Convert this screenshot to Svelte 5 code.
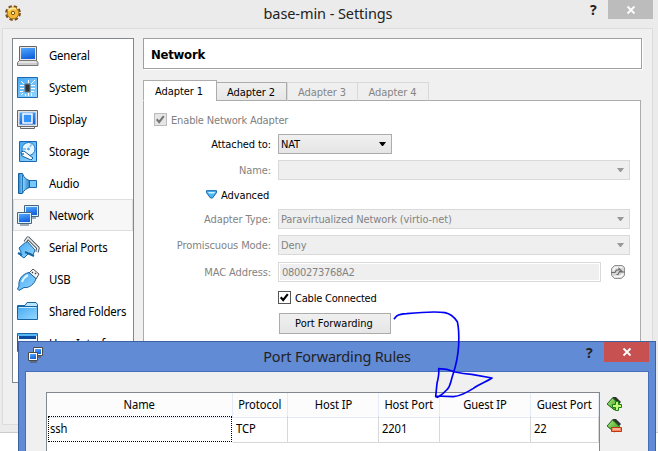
<script>
  const pages = [
    ['General', 'general'], ['System', 'system'], ['Display', 'display'],
    ['Storage', 'storage'], ['Audio', 'audio'], ['Network', 'network'],
    ['Serial Ports', 'serial'], ['USB', 'usb'], ['Shared Folders', 'folder'],
    ['User Interface', 'ui']
  ];
  const tabs = ['Adapter 1', 'Adapter 2', 'Adapter 3', 'Adapter 4'];
  const columns = ['Name', 'Protocol', 'Host IP', 'Host Port', 'Guest IP', 'Guest Port'];
  const rule = ['ssh', 'TCP', '', '2201', '', '22'];
</script>

{#snippet select(value, enabled)}
  <div class="select" class:enabled>
    <span>{value}</span>
    <svg width="7" height="4" viewBox="0 0 7 4"><path d="M0 0h7L4 4H3z" fill={enabled ? '#000' : '#999'} /></svg>
  </div>
{/snippet}

{#snippet check(color)}
  <svg width="11" height="11" viewBox="0 0 11 11"><path d="M1.7 5.2 4.2 8 8.8 2.2" fill="none" stroke={color} stroke-width="2.1" /></svg>
{/snippet}

{#snippet icon(name)}
  <svg class="icon" width="22" height="22" viewBox="0 0 22 22">
    {#if name === 'general'}
      <path d="M2.5 1.5h17v14h-17z" fill="#e8e8e8" stroke="#666" />
      <path d="M4 3h14v11H4z" fill="url(#blue)" />
      <path d="M.5 17.5 2.5 15.5h17l1.5 2v3H.5z" fill="#ccc" stroke="#777" /><path d="M2 17h17" stroke="#fff" />
    {:else if name === 'system'}
      <path d="M.5.5h20v20H.5z" fill="url(#sky)" stroke="#1b69b5" />
      <path d="M8 7h5v8H8z" fill="#333" stroke="#777" />
      <path d="M3 8.5h4M3 11.5h4M3 14.5h3M14 8.5h4M14 11.5h4M14 14.5h3M11.5 3v3M8.5 17v2M11.5 16v3M14.5 16v3M4 4l3 3M18 3l-4 4M4 18l2-2" stroke="#fff" fill="none" />
    {:else if name === 'display'}
      <path d="M.5 1.5h20v16H.5z" fill="#e4e4e4" stroke="#666" /><path d="M3.5 17.5h14v2h-14z" fill="#eee" stroke="#666" />
      <path d="M2.5 3.5h16v12h-16z" fill="url(#blue)" /><path d="M6 5h9v9H6z" fill="#3593fb" stroke="#fff" stroke-width="1.5" />
    {:else if name === 'storage'}
      <path d="M2.5.5h17v20h-17z" fill="url(#sky)" stroke="#1866b4" />
      <circle cx="11.5" cy="8" r="6.5" fill="#eaf6ff" stroke="#1778c8" /><path d="m11 8 4-5M11 8H6" stroke="#8cc9f8" stroke-width="2" />
      <circle cx="11.5" cy="8" r="2" fill="#53abf0" stroke="#fff" />
      <path d="m4 11 3-1 9 7-2 2-9-4z" fill="#fff" stroke="#17609f" /><circle cx="6" cy="13" r="1" fill="#2b78bc" />
    {:else if name === 'audio'}
      <path d="M12 7.5h7.5v7H12z" fill="#78c7fb" stroke="#1c69ad" />
      <path d="M1.5.5h4c1 4 4 6 7 7v7c-3 1-6 3-7 6h-4z" fill="url(#speaker)" stroke="#17619f" /><path d="M5.5 1v19" stroke="#2179bb" />
    {:else if name === 'network'}
      <path d="M7.5.5h14v11h-14zM11 13h8" fill="#d9efff" stroke="#47657e" /><path d="M9 2h11v8H9z" fill="url(#blue)" />
      <path d="M.5 7.5h14v11H.5zM3 20h9" fill="#d9efff" stroke="#47657e" /><path d="M2 9h11v8H2z" fill="url(#blue)" />
    {:else if name === 'serial'}
      <path d="m2 11 8-7 8 9-2 5-4-2-5 5-4-3 1-3z" fill="url(#sky)" stroke="#1766a4" />
      <path d="m5 18-4-2M8 15l9 4" stroke="#1766a4" stroke-width="2" />
      <path d="m8 5 3-4 10 10-1 4" fill="none" stroke="#4b555d" stroke-width="3.4" stroke-linejoin="round" /><path d="m8 5 3-4 10 10-1 4" fill="none" stroke="#eee" stroke-width="1.5" />
    {:else if name === 'usb'}
      <path d="m12 4 4-4 6 5-3 5z" fill="#f6f6f6" stroke="#555" /><path d="m15 3 1 1m2 0 1 1" stroke="#444" stroke-width="1.5" />
      <path d="M2 17C1 11 5 5 12 3.5l7 6c-1 5-7 10-12 9l-5 3-1.5-1.5z" fill="url(#sky)" stroke="#17619f" />
      <path d="M5 13q2-5 6-7" fill="none" stroke="#e0f7ff" stroke-width="2" />
    {:else if name === 'folder'}
      <path d="M.5 4.5H8l2-3h9l1.5 2v14H.5z" fill="#b9e5ff" stroke="#1765a6" /><path d="M.5 5.5h20v13H.5z" fill="url(#sky)" stroke="#1765a6" /><path d="M2 6.5h17" stroke="#c8ecff" />
    {:else}
      <path d="M.5.5h20v18H.5z" fill="#eff8ff" stroke="#1765a6" /><path d="M1 1h19v2H1z" fill="#58b7f7" /><path d="M2 3h17v3H2z" fill="#0b4b9f" />
      <path d="M3 8h5v9H3z" fill="#53aff4" /><path d="M10 8h8v2h-8z" fill="#175aa5" />
    {/if}
  </svg>
{/snippet}

<svg class="defs" width="0" height="0"><defs>
  <linearGradient id="blue" x2=".3" y2="1"><stop stop-color="#50a8ff" /><stop offset="1" stop-color="#1764df" /></linearGradient>
  <linearGradient id="sky" x2=".8" y2="1"><stop stop-color="#45a8f2" /><stop offset="1" stop-color="#8fd4ff" /></linearGradient>
  <linearGradient id="speaker"><stop stop-color="#277fc5" /><stop offset=".4" stop-color="#8ad2ff" /><stop offset="1" stop-color="#2d83c9" /></linearGradient>
  <linearGradient id="green" x2="1" y2="1"><stop stop-color="#b6ed80" /><stop offset="1" stop-color="#27901b" /></linearGradient>
</defs></svg>

<div class="screen">
  <section class="settings">
    <header class="titlebar">
      <svg class="gear" width="17" height="17" viewBox="0 0 17 17">
        <circle cx="8" cy="8" r="6.4" fill="none" stroke="#76501d" stroke-width="3" stroke-dasharray="3.1 1.93" />
        <circle cx="8" cy="8" r="5.8" fill="#f2b735" stroke="#b27518" /><path d="M3.5 6Q6 2 11 4" stroke="#ffe793" stroke-width="2" fill="none" />
        <circle cx="8" cy="8" r="1.7" fill="#fff1a1" stroke="#80500f" />
      </svg>
      <h1>base-min - Settings</h1><b class="help">?</b>
      <button class="close"><svg width="8" height="8"><path d="m.5.5 7 7m0-7-7 7" stroke="#fff" stroke-width="1.8" /></svg></button>
    </header>
    <div class="client">
      <nav>
        {#each pages as [label, name]}
          <div class="page" class:current={name === 'network'}>{@render icon(name)}<span>{label}</span></div>
        {/each}
      </nav>
      <main>
        <h2>Network</h2>
        <div class="tabs">
          {#each tabs as tab, i}<div class="tab" class:active={i === 0} class:off={i > 1}>{tab}</div>{/each}
        </div>
        <div class="panel">
          <div class="enable"><i class="box off">{@render check('#777')}</i><span>Enable Network Adapter</span></div>
          <div class="row"><label>Attached to:</label><div class="short">{@render select('NAT', true)}</div></div>
          <div class="row dim"><label>Name:</label>{@render select('', false)}</div>
          <div class="advanced"><svg width="11" height="9" viewBox="0 0 11 9"><path d="M.5.7h10v2L6.5 8h-2l-4-5.3z" fill="#4fb6ef" stroke="#1166b3" /><path d="M2 2h7L8 3.5H3z" fill="#cbf2ff" /></svg><span>Advanced</span></div>
          <div class="row dim"><label>Adapter Type:</label>{@render select('Paravirtualized Network (virtio-net)', false)}</div>
          <div class="row dim"><label>Promiscuous Mode:</label>{@render select('Deny', false)}</div>
          <div class="row dim mac"><label>MAC Address:</label><div class="field">0800273768A2</div>
            <svg width="16" height="16" viewBox="0 0 16 16"><path d="M4.5 1.5h8l2 2v8l-3 3h-7l-3-3v-7z" fill="#d6d6d6" stroke="#929292" /><path d="M3 6.5q1-3 4-3h5M13 9.5q-1 3-4 3H4" fill="none" stroke="#fafafa" stroke-width="1.5" /><path d="M1 8.5h4l1.5-2.5H9V4.5l3 3H9.5L8 10.5H6.5M9.5 8H15" fill="none" stroke="#6d6d6d" stroke-width="1.2" /></svg>
          </div>
          <div class="cable"><i class="box">{@render check('#000')}</i><span>Cable Connected</span></div>
          <button class="forward">Port Forwarding</button>
        </div>
      </main>
    </div>
  </section>

  <section class="dialog">
    <header class="titlebar">
      <svg class="net" width="16" height="16" viewBox="0 0 16 16"><path d="M5.5.5h9v8h-9zM8 10h5" fill="#fff" stroke="#4b4b4b" /><path d="M7 2h6v5H7z" fill="url(#blue)" /><path d="M.5 5.5h9v8h-9zM2 15h7" fill="#fff" stroke="#4b4b4b" /><path d="M2 7h6v5H2z" fill="url(#blue)" /></svg>
      <h1>Port Forwarding Rules</h1><b class="help">?</b>
      <button class="close"><svg width="8" height="8"><path d="m.5.5 7 7m0-7-7 7" stroke="#fff" stroke-width="1.8" /></svg></button>
    </header>
    <div class="content">
      <div class="table">
        <div class="cells head">{#each columns as column}<div><span>{column}</span></div>{/each}</div>
        <div class="cells rule">{#each rule as cell}<div><span>{cell}</span></div>{/each}</div>
      </div>
      <div class="tools">
        {#each [true, false] as add}
          <svg width="17" height="17" viewBox="0 0 17 17"><path d="m7 1 3 0 5 5-7 8-7-6z" fill="#303530" /><path d="m6.5 2 7 6.5-5 5.5L1 8z" fill="url(#green)" stroke="#1e7419" />
            {#if add}<path d="M9.5 5.5h3v3h3v3h-3v3h-3v-3h-3v-3h3z" fill="#c8fa78" stroke="#16801a" />{:else}<path d="M5.5 9.5h10v4h-10z" fill="#f58a62" stroke="#c23512" /><path d="M7 11h7" stroke="#ffd9c4" />{/if}
          </svg>
        {/each}
      </div>
    </div>
  </section>

  <svg class="ink" width="658" height="451" viewBox="0 0 658 451">
    <path transform="translate(340 300) scale(.33333)" d="M163 56 170 48Q180 42 200 41C240 37 290 34 315 38C335 42 345 55 352 65C358 90 357 110 356 135C354 170 350 190 340 220C330 250 332 258 322 268C312 280 300 288 293 292L287 290 291 250Q298 225 296 206C320 206 330 210 345 216Q370 222 395 223L456 234C440 245 420 250 400 265C380 278 360 288 340 290L287 288" />
  </svg>
</div>

<style>
  :global(body) { margin: 0; overflow: hidden; background: #fff; }
  * { box-sizing: border-box; }
  .defs { position: absolute; }
  svg { display: block; flex: none; overflow: visible; }
  h1, h2 { margin: 0; font-weight: 400; }
  button { padding: 0; border: 0; }
  .screen { position: relative; width: 658px; height: 451px; overflow: hidden; font: 12px/16px "Noto Sans", sans-serif; color: #000; }
  .settings { height: 433px; background: #ebebeb; border-bottom: 1px solid #ccc; display: flex; flex-direction: column; }
  .titlebar { display: flex; height: 28px; align-items: flex-start; flex: none; }
  .gear { margin: 5px 0 0 5px; }
  .titlebar h1 { flex: 1; text-align: center; font: 14.5px/28px "Noto Sans", sans-serif; letter-spacing: -.18px; color: #222; white-space: nowrap; }
  .settings .titlebar h1 { padding-left: 44px; line-height: 26px; letter-spacing: -.08px; }
  .help { font: bold 14px/19px "Noto Sans", sans-serif; width: 18px; color: #222; }
  .close { width: 45px; height: 19px; display: flex; align-items: center; justify-content: center; background: #bcbcbc; margin-right: 5px; }
  .client { margin: 0 5px 7px 2px; flex: 1; min-height: 0; border: 1px solid #dcdcdc; background: #f0f0f0; display: flex; padding: 9px 10px 0 9px; gap: 9px; }
  nav { width: 122px; height: 345px; flex: none; border: 1px solid #828790; background: #fff; overflow: hidden; }
  .page { height: 32px; display: flex; align-items: center; gap: 10px; padding: 0 0 1px 3px; font-size: 12.3px; letter-spacing: -.22px; white-space: nowrap; border: 1px solid transparent; }
  .page span { padding-top: 2px; transform: scaleX(.93); transform-origin: left; }
  .page .icon { transform: translateY(1px); }
  .current { background: #f7f7f7; border-color: #dedede; }
  main { flex: 1; min-width: 0; display: flex; flex-direction: column; font: 11px/14px "DejaVu Sans Condensed", "DejaVu Sans", sans-serif; letter-spacing: -.1px; }
  h2 { height: 31px; border: 1px solid #a0a0a0; background: #fff; box-shadow: 1px 1px #fff; font: bold 13px/31px "DejaVu Sans Condensed", sans-serif; letter-spacing: -.25px; padding-left: 7px; margin-bottom: 11px; flex: none; }
  .tabs { display: flex; align-items: flex-end; height: 21px; flex: none; margin-bottom: -1px; position: relative; }
  .tab { width: 71px; height: 19px; border: 1px solid #acacac; background: linear-gradient(#f0f0f0, #e7e7e7); text-align: center; line-height: 19px; white-space: nowrap; padding-right: 1px; }
  .tab.active { width: 74px; height: 21px; background: #fff; border-bottom-color: #fff; padding-right: 2px; line-height: 21px; }
  .tab.active + .tab { margin-left: -1px; }
  .tab.off { color: #858585; border-color: #d9d9d9; border-bottom-color: #acacac; background: #efefef; }
  .tab.off + .off { border-left: 0; }
  .panel { flex: 1; border: 1px solid #acacac; margin-right: 1px; background: #fff; padding: 12px 10px 0; min-height: 0; }
  .enable, .cable, .advanced { display: flex; align-items: center; gap: 4px; white-space: nowrap; }
  .enable { height: 13px; color: #808080; margin-bottom: 8px; letter-spacing: -.15px; }
  .enable span, .cable span { padding-top: 2px; }
  .box { width: 13px; height: 13px; border: 1px solid #555; background: #fff; }
  .box.off { border-color: #bcbcbc; background: #e6e6e6; }
  .row { display: flex; align-items: center; gap: 7px; height: 20px; margin-bottom: 6px; }
  .row label { width: 117px; text-align: right; white-space: nowrap; flex: none; padding-top: 1px; }
  .dim { color: #838383; }
  .short { width: 114px; display: flex; }
  .select { flex: 1; height: 20px; border: 1px solid #d9d9d9; background: #efefef; display: flex; align-items: center; justify-content: space-between; padding: 0 5px 0 2px; white-space: nowrap; }
  .select span { padding-top: 2px; }
  .select.enabled { border-color: #acacac; background: linear-gradient(#f0f0f0, #e5e5e5); }
  .advanced { height: 17px; margin: 0 0 6px 52px; }
  .advanced span { padding-top: 2px; }
  .mac { margin: 7px 0 9px; }
  .field { width: 323px; height: 20px; border: 1px solid #d9d9d9; box-shadow: inset 0 0 0 1px #fff; background: #efefef; padding-left: 3px; line-height: 20px; letter-spacing: -.3px; }
  .mac svg { margin-left: 2px; }
  .cable { height: 13px; margin-left: 124px; letter-spacing: -.2px; }
  .forward { display: block; width: 112px; height: 21px; margin: 9px 0 0 125px; padding: 1px 2px 0 0; border: 1px solid #acacac; background: linear-gradient(#f0f0f0, #e5e5e5); font: inherit; color: #000; white-space: nowrap; }
  .dialog { position: absolute; left: 18px; top: 341px; width: 638px; height: 111px; background: #628bd5; border: 1px solid #3c60a2; display: flex; flex-direction: column; }
  .dialog .titlebar { height: 29px; }
  .net { margin: 5px 0 0 9px; }
  .dialog h1 { padding-left: 44px; line-height: 28px; }
  .dialog .help { line-height: 21px; }
  .dialog .close { background: #c75050; height: 20px; margin-right: 6px; }
  .content { flex: 1; min-height: 0; margin: 0 6px; border: 1px solid #446ebb; border-bottom: 0; background: #f0f0f0; display: flex; padding: 20px 0 0 20px; gap: 6px; }
  .table { width: 554px; border: 1px solid #828790; border-bottom: 0; background: #fff; font-size: 12.3px; letter-spacing: -.1px; }
  .cells { display: grid; grid-template-columns: 186px 55px 91px 61px 91px 68px; }
  .cells div { border-right: 1px solid #d8d8d8; border-bottom: 1px solid #d8d8d8; white-space: nowrap; }
  .cells span { display: inline-block; transform: scaleX(.91); }
  .head { height: 23px; background: #fcfcfc; text-align: center; line-height: 24px; }
  .head div { border-color: #e2ebf7; }
  .rule { height: 25px; line-height: 26px; }
  .rule div { padding-left: 3px; }
  .rule span { transform-origin: left; }
  .rule div:first-child { border: 1px dotted #000; padding-left: 1px; margin: 0 1px 1px; line-height: 23px; }
  .tools { display: flex; flex-direction: column; gap: 5px; padding-top: 4px; }
  .ink { position: absolute; inset: 0; pointer-events: none; }
  .ink path { fill: none; stroke: #0000f5; stroke-width: 5; stroke-linecap: round; stroke-linejoin: round; }
</style>
